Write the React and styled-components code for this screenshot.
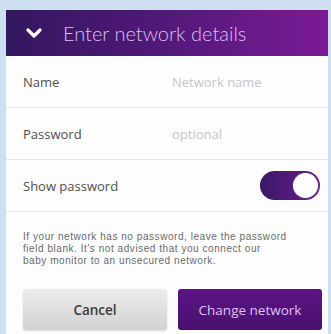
import React from "react";
import styled, { createGlobalStyle } from "styled-components";

const Global = createGlobalStyle`
  html, body { margin: 0; padding: 0; background: #cddff0; }
  body { font-family: "Open Sans", "Liberation Sans", sans-serif; }
`;

const Page = styled.div`
  width: 331px;
  height: 334px;
  padding: 10px 3px 0 6px;
  box-sizing: border-box;
  overflow: hidden;
`;

const Panel = styled.div`
  background: #fdfdfd;
  height: 324px;
  display: flex;
  flex-direction: column;
`;

const Header = styled.div`
  height: 46px;
  background: linear-gradient(90deg, #33175f 0%, #4f1877 45%, #7a1b95 100%);
  display: flex;
  align-items: center;
  padding-left: 20px;
  gap: 21px;
  color: #d9c2ec;
  font-family: "Lato", sans-serif;
  font-size: 20px;
  font-weight: 300;
`;

const Row = styled.div`
  height: 52px;
  display: flex;
  align-items: center;
  padding: 0 8px 0 17px;
  border-bottom: 1px solid #e6e6e6;
  box-sizing: border-box;
`;

const Label = styled.div`
  width: 149px;
  font-size: 13px;
  color: #505050;
  flex: ${(p) => (p.$grow ? 1 : "none")};
`;

const Placeholder = styled.div`
  font-size: 13px;
  color: #c6c6c6;
`;

const Toggle = styled.div`
  width: 60px;
  height: 29px;
  border-radius: 15px;
  background: linear-gradient(90deg, #3b1868, #6a1b8a);
  display: flex;
  align-items: center;
  justify-content: flex-end;
  padding: 0 2px;
  box-sizing: border-box;
`;

const Knob = styled.div`
  width: 25px;
  height: 25px;
  border-radius: 50%;
  background: #fff;
  box-shadow: 0 0 0 1px rgba(120, 100, 140, 0.3);
`;

const Info = styled.p`
  margin: 19px 0 0 17px;
  width: 304px;
  font-family: "Liberation Sans", sans-serif;
  font-size: 10px;
  letter-spacing: 0.55px;
  line-height: 12px;
  color: #6a6a6a;
  white-space: nowrap;
`;

const Buttons = styled.div`
  display: flex;
  gap: 11px;
  padding: 0 6px 0 17px;
  margin-top: 22px;
`;

const Button = styled.button`
  flex: 1;
  height: 41px;
  border-radius: 3px;
  border: none;
  font-family: inherit;
  font-size: 13.5px;
  font-weight: ${(p) => (p.$primary ? 400 : 600)};
  color: ${(p) => (p.$primary ? "#dcc4ee" : "#3a3a3a")};
  background: ${(p) =>
    p.$primary
      ? "linear-gradient(180deg, #5b1583, #4a1070)"
      : "linear-gradient(180deg, #ececec, #d2d2d2)"};
  box-shadow: ${(p) => (p.$primary ? "none" : "0 1px 2px rgba(0,0,0,0.15)")};
`;

export default function App() {
  return (
    <Page>
      <Global />
      <Panel>
        <Header>
          <svg width="16" height="12" viewBox="0 0 16 12">
            <path d="M2 3 L8 9 L14 3" fill="none" stroke="#fff" strokeWidth="3.2" strokeLinecap="round" strokeLinejoin="round" />
          </svg>
          <span>Enter network details</span>
        </Header>
        <Row>
          <Label>Name</Label>
          <Placeholder>Network name</Placeholder>
        </Row>
        <Row>
          <Label>Password</Label>
          <Placeholder>optional</Placeholder>
        </Row>
        <Row>
          <Label $grow>Show password</Label>
          <Toggle>
            <Knob />
          </Toggle>
        </Row>
        <Info>
          If your network has no password,  leave the password
          <br />
          field blank. It's not advised that you connect our
          <br />
          baby monitor to an unsecured network.
        </Info>
        <Buttons>
          <Button>Cancel</Button>
          <Button $primary>Change network</Button>
        </Buttons>
      </Panel>
    </Page>
  );
}
